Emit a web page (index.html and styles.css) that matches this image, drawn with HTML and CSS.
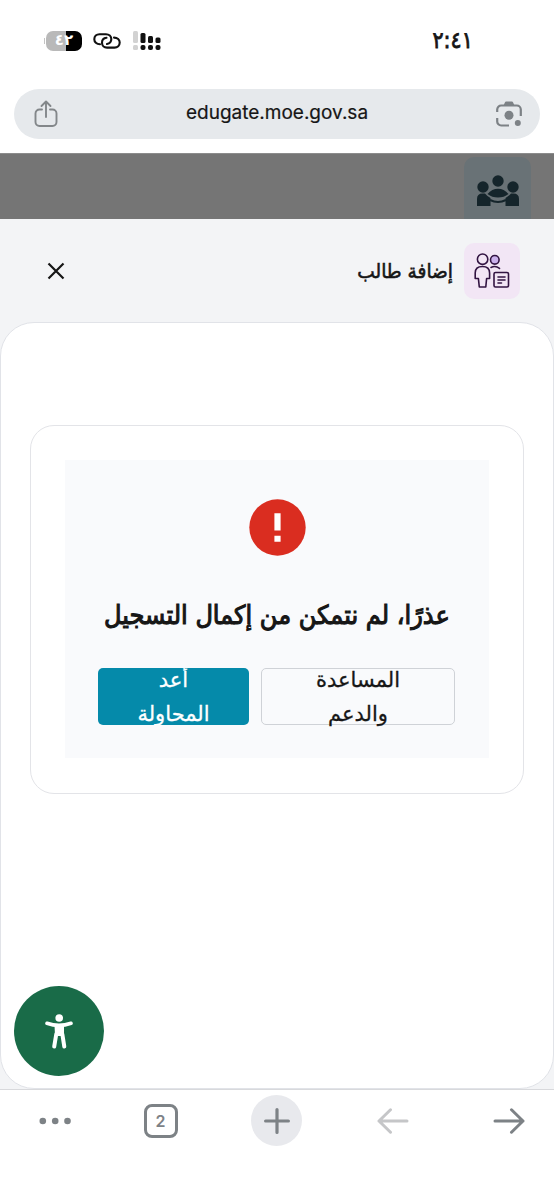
FILE: index.html
```
<!DOCTYPE html>
<html lang="ar">
<head>
    <meta charset="UTF-8">
    <meta name="viewport" content="width=device-width, initial-scale=1.0">
    <title>إضافة طالب</title>
    <link rel="stylesheet" href="styles.css">
</head>
<body>
    <div class="status-bar">
        <div class="status-icons">
            <div class="battery"><span>٤٢</span></div>
            <svg class="link-icon" width="28" height="18" viewBox="0 0 28 18" fill="none" stroke="#111" stroke-width="2.1" stroke-linecap="round">
                <path d="M7 12.200C3.500 12.200 1.300 9.900 1.300 7.200 1.300 4.300 3.500 2.200 6.500 2.200h6.500c3 0 5.300 2 5.300 4.900 0 2.800-2 4.600-4.300 4.900"/>
                <path d="M21 5.600c3.500 0 5.700 2.300 5.700 5 0 2.900-2.200 5-5.200 5H14c-3 0-5-2-5-4.900 0-2.800 2-4.600 4.500-4.900"/>
            </svg>
            <svg class="signal-icon" width="28" height="20" viewBox="0 0 28 20" fill="#111">
                <rect x="0" y="0" width="5" height="12" rx="1.500" fill="#d2d2d2"/>
                <rect x="0" y="14" width="5" height="5" rx="1.500" fill="#d2d2d2"/>
                <rect x="7.500" y="2" width="5" height="10" rx="1.500"/>
                <rect x="7.500" y="14" width="5" height="5" rx="2"/>
                <rect x="15" y="5" width="5" height="7" rx="1.500"/>
                <rect x="15" y="14" width="5" height="5" rx="2"/>
                <rect x="22.500" y="6.500" width="5" height="5.500" rx="1.500"/>
                <rect x="22.500" y="14" width="5" height="5" rx="2"/>
            </svg>
        </div>
        <div class="clock">٢:٤١</div>
    </div>

    <div class="address-bar">
        <svg width="24" height="28" viewBox="0 0 24 28" fill="none" stroke="#83878a" stroke-width="1.900" stroke-linecap="round" stroke-linejoin="round">
            <path d="M8 9.500H5.500a4 4 0 0 0-4 4v8.500a4 4 0 0 0 4 4h13a4 4 0 0 0 4-4v-8.500a4 4 0 0 0-4-4H16M12 17V2M7.500 6 12 1.500 16.500 6"/>
        </svg>
        <span class="url">edugate.moe.gov.sa</span>
        <svg width="26" height="26" viewBox="0 0 26 26" fill="none" stroke="#7d8286" stroke-width="2.200">
            <path d="M1.200 11V8.500a4 4 0 0 1 4-4h15.600a4 4 0 0 1 4 4V15M1.200 17v3.500a4 4 0 0 0 4 4H13"/>
            <path d="M7.500 4.500 9 1.200Q9.300.5 10 .5h6q.7 0 1 .7l1.500 3.300z" fill="#7d8286" stroke="none"/>
            <circle cx="13" cy="14.300" r="4.500" fill="#7d8286" stroke="none"/>
            <circle cx="21.800" cy="22" r="3" fill="#7d8286" stroke="none"/>
        </svg>
    </div>

    <div class="backdrop">
        <div class="group-tile">
            <svg width="42" height="32" viewBox="0 0 42 32" fill="#15252b">
                <circle cx="21" cy="6" r="5.700"/>
                <circle cx="6" cy="12" r="5.700"/>
                <circle cx="36" cy="12" r="5.700"/>
                <path d="M10.500 19Q15 13.800 21 13.800T31.500 19Q27 22.500 21 22.500T10.500 19z"/>
                <path d="M0 31v-7q0-5.500 5.500-5.500h2.500Q10 21 13.500 23v8zM42 31v-7q0-5.500-5.500-5.500H34q-2 2.500-5.500 4.500v8z"/>
                <path d="M13 25q8 4 16 0" fill="none" stroke="#15252b" stroke-width="2.200"/>
            </svg>
        </div>
    </div>

    <main class="sheet">
        <header class="sheet-header" dir="rtl">
            <div class="sheet-title">
                <div class="student-tile">
                    <svg width="36" height="36" viewBox="0 0 36 36" fill="none" stroke="#321442" stroke-width="1.600" stroke-linejoin="round" stroke-linecap="round">
                        <circle cx="8.600" cy="6.200" r="5.200"/>
                        <circle cx="20.800" cy="6.800" r="4.300" fill="#cbb1ec"/>
                        <path d="M17 14.500q4.500-2.300 8.500.9"/>
                        <path d="M1.200 25.500V20q0-6.500 7.200-6.500t7.200 6.500v5.500h-3L11.800 34h-6.500l-.9-8.500z"/>
                        <rect x="20" y="19.500" width="14.500" height="14.500" rx="1.500"/>
                        <path d="M24 24h7M24 27h7M24 30h3.500"/>
                    </svg>
                </div>
                <h1>إضافة طالب</h1>
            </div>
            <svg class="close" width="18" height="18" viewBox="0 0 18 18" stroke="#161616" stroke-width="2.200">
                <path d="M1.500 1.500l15 15M16.500 1.500l-15 15"/>
            </svg>
        </header>

        <section class="panel">
            <div class="card">
                <div class="message">
                    <svg width="57" height="57" viewBox="0 0 57 57">
                        <circle cx="28.500" cy="28.500" r="28.200" fill="#da2d20"/>
                        <path d="M25.400 14.300h6.200v17.200h-6.200zM25.400 36.700h6.200v6h-6.200z" fill="#fff"/>
                    </svg>
                    <h2 dir="rtl">عذرًا، لم نتمكن من إكمال التسجيل</h2>
                    <div class="actions" dir="rtl">
                        <button class="btn btn-outline">المساعدة<br>والدعم</button>
                        <button class="btn btn-primary">أعد<br>المحاولة</button>
                    </div>
                </div>
            </div>
        </section>

        <button class="accessibility">
            <svg width="28" height="35" viewBox="0 0 28 35" fill="none" stroke="#fff" stroke-linecap="round" stroke-linejoin="round">
                <circle cx="14.200" cy="4" r="3.800" fill="#fff" stroke="none"/>
                <path d="M2 9.300Q14 13.500 26 9.300" stroke-width="3.600"/>
                <path d="M10.500 11.500h7.500L18 21h-7z" fill="#fff" stroke-width="2"/>
                <path d="M11.300 20 9.200 32.600M17.300 20l2 12.600" stroke-width="4"/>
            </svg>
        </button>
    </main>

    <nav class="toolbar">
        <div class="tool tool-menu">
            <svg width="32" height="8" viewBox="0 0 32 8" fill="#7d8286">
                <circle cx="3.800" cy="4" r="3.300"/>
                <circle cx="16.200" cy="4" r="3.300"/>
                <circle cx="28.500" cy="4" r="3.300"/>
            </svg>
        </div>
        <div class="tool"><span class="tabs">2</span></div>
        <div class="tool">
            <span class="new-tab">
                <svg width="26" height="26" viewBox="0 0 26 26" stroke="#7d8286" stroke-width="3.200" stroke-linecap="round">
                    <path d="M13 1.600v22.800M1.600 13h22.800"/>
                </svg>
            </span>
        </div>
        <div class="tool">
            <svg width="32" height="26" viewBox="0 0 32 26" fill="none" stroke="#c5c6c8" stroke-width="3" stroke-linecap="round" stroke-linejoin="round">
                <path d="M30 13H2M13.500 1.800 2 13l11.500 11.200"/>
            </svg>
        </div>
        <div class="tool">
            <svg width="32" height="26" viewBox="0 0 32 26" fill="none" stroke="#7d8286" stroke-width="3" stroke-linecap="round" stroke-linejoin="round">
                <path d="M2 13h28M18.500 1.800 30 13 18.500 24.200"/>
            </svg>
        </div>
    </nav>
</body>
</html>
```

FILE: styles.css
```
:root {
    --primary: #058aaa;
    --danger: #da2d20;
    --green: #196b48;
    --dark: #161616;
    --grey: #7d8286;
    --surface: #f3f4f6;
}

* {
    margin: 0;
    padding: 0;
    box-sizing: border-box;
}

body {
    width: 554px;
    height: 1200px;
    overflow: hidden;
    display: flex;
    flex-direction: column;
    background-color: #fff;
    color: var(--dark);
    font-family: 'DejaVu Sans', sans-serif;
}

svg {
    display: block;
    flex-shrink: 0;
}

/* Phone status bar */
.status-bar {
    height: 89px;
    padding: 29px 81px 0 44px;
    display: flex;
    justify-content: space-between;
    align-items: flex-start;
}

.status-icons {
    display: flex;
    align-items: center;
    height: 24px;
}

.battery {
    width: 38px;
    height: 20px;
    padding-left: 2px;
    background: linear-gradient(#c4c4c4, #c4c4c4) 0 center / 1px 6px no-repeat;
}

.battery span {
    display: block;
    width: 36px;
    height: 20px;
    border-radius: 7px;
    background: linear-gradient(to right, #b9b9b9 55%, #000 55%);
    color: #fff;
    font-size: 15px;
    font-weight: bold;
    line-height: 19px;
    text-align: center;
}

.link-icon {
    margin-left: 11px;
}

.signal-icon {
    margin-left: 12px;
}

.clock {
    font-size: 23px;
    line-height: 23px;
    -webkit-text-stroke: 0.8px var(--dark);
    transform: scaleX(0.9);
    transform-origin: right;
}

.address-bar {
    height: 50px;
    margin: 0 14px 14px;
    padding: 0 18px 0 20px;
    border-radius: 25px;
    background-color: #e6e9ec;
    display: flex;
    align-items: center;
    justify-content: space-between;
}

.url {
    font-family: Inter, sans-serif;
    font-size: 19px;
    line-height: 24px;
    padding-bottom: 2px;
    -webkit-text-stroke: 0.2px var(--dark);
}

.backdrop {
    height: 66px;
    padding: 3px 23px 0 0;
    background-color: #757575;
    border-top: 1px solid #8c8c8c;
    display: flex;
    justify-content: flex-end;
}

.group-tile {
    width: 67px;
    border-radius: 10px 10px 0 0;
    background-color: #697276;
    display: flex;
    justify-content: center;
    padding-top: 18px;
}

/* Bottom sheet */
.sheet {
    position: relative;
    height: 870px;
    background-color: var(--surface);
    display: flex;
    flex-direction: column;
}

.sheet-header {
    height: 103px;
    padding: 0 34px 0 47px;
    display: flex;
    align-items: center;
    justify-content: space-between;
}

.sheet-title {
    display: flex;
    align-items: center;
    gap: 11px;
}

.student-tile {
    width: 56px;
    height: 56px;
    border-radius: 10px;
    background-color: #f2e6f5;
    display: flex;
    align-items: center;
    justify-content: center;
}

h1 {
    font-size: 20px;
    line-height: 30px;
    font-weight: normal;
    -webkit-text-stroke: 0.6px var(--dark);
    transform: scaleX(0.93);
    transform-origin: right;
}

.panel {
    height: 767px;
    border: 1px solid #e1e3e8;
    border-radius: 34px;
    background-color: #fff;
    padding: 102px 29px 0;
}

.card {
    height: 369px;
    padding: 34px;
    border: 1px solid #e3e4e8;
    border-radius: 24px;
}

.message {
    height: 298px;
    padding: 39px 34px 0 33px;
    background-color: #f9fafc;
    display: flex;
    flex-direction: column;
    align-items: center;
}

.message svg {
    margin-left: 1px;
}

h2 {
    margin-top: 37px;
    font-size: 26px;
    line-height: 44px;
    font-weight: normal;
    white-space: nowrap;
    -webkit-text-stroke: 1.1px var(--dark);
    transform: scaleX(0.925);
}

.actions {
    width: 100%;
    margin-top: 31px;
    display: flex;
    gap: 12px;
}

.btn {
    height: 57px;
    border-radius: 5px;
    font-family: 'DejaVu Sans', sans-serif;
    font-size: 21px;
    line-height: 34px;
    display: flex;
    align-items: center;
    justify-content: center;
    text-align: center;
    -webkit-text-stroke: 0.3px currentColor;
}

.btn-outline {
    width: 194px;
    border: 1px solid #cfd2d7;
    background-color: transparent;
    color: var(--dark);
}

.btn-primary {
    width: 151px;
    border: none;
    background-color: var(--primary);
    color: #fff;
    overflow: hidden;
}

.accessibility {
    position: absolute;
    left: 14px;
    bottom: 13px;
    width: 90px;
    height: 90px;
    border: none;
    border-radius: 50%;
    background-color: var(--green);
    display: flex;
    align-items: center;
    justify-content: center;
}

/* Browser toolbar */
.toolbar {
    height: 111px;
    padding: 5px 20px 0 29px;
    border-top: 1px solid #d8d9dc;
    display: flex;
    align-items: flex-start;
    justify-content: space-between;
}

.tool {
    width: 51px;
    height: 51px;
    display: flex;
    align-items: center;
    justify-content: center;
}

.tool-menu {
    margin-right: -10px;
}

.tabs {
    width: 34px;
    height: 34px;
    border: 3px solid var(--grey);
    border-radius: 8px;
    color: var(--grey);
    font-family: Inter, sans-serif;
    font-size: 16px;
    font-weight: 600;
    line-height: 29px;
    text-align: center;
}

.new-tab {
    width: 51px;
    height: 51px;
    border-radius: 50%;
    background-color: #e8e9ed;
    display: flex;
    align-items: center;
    justify-content: center;
}
```
